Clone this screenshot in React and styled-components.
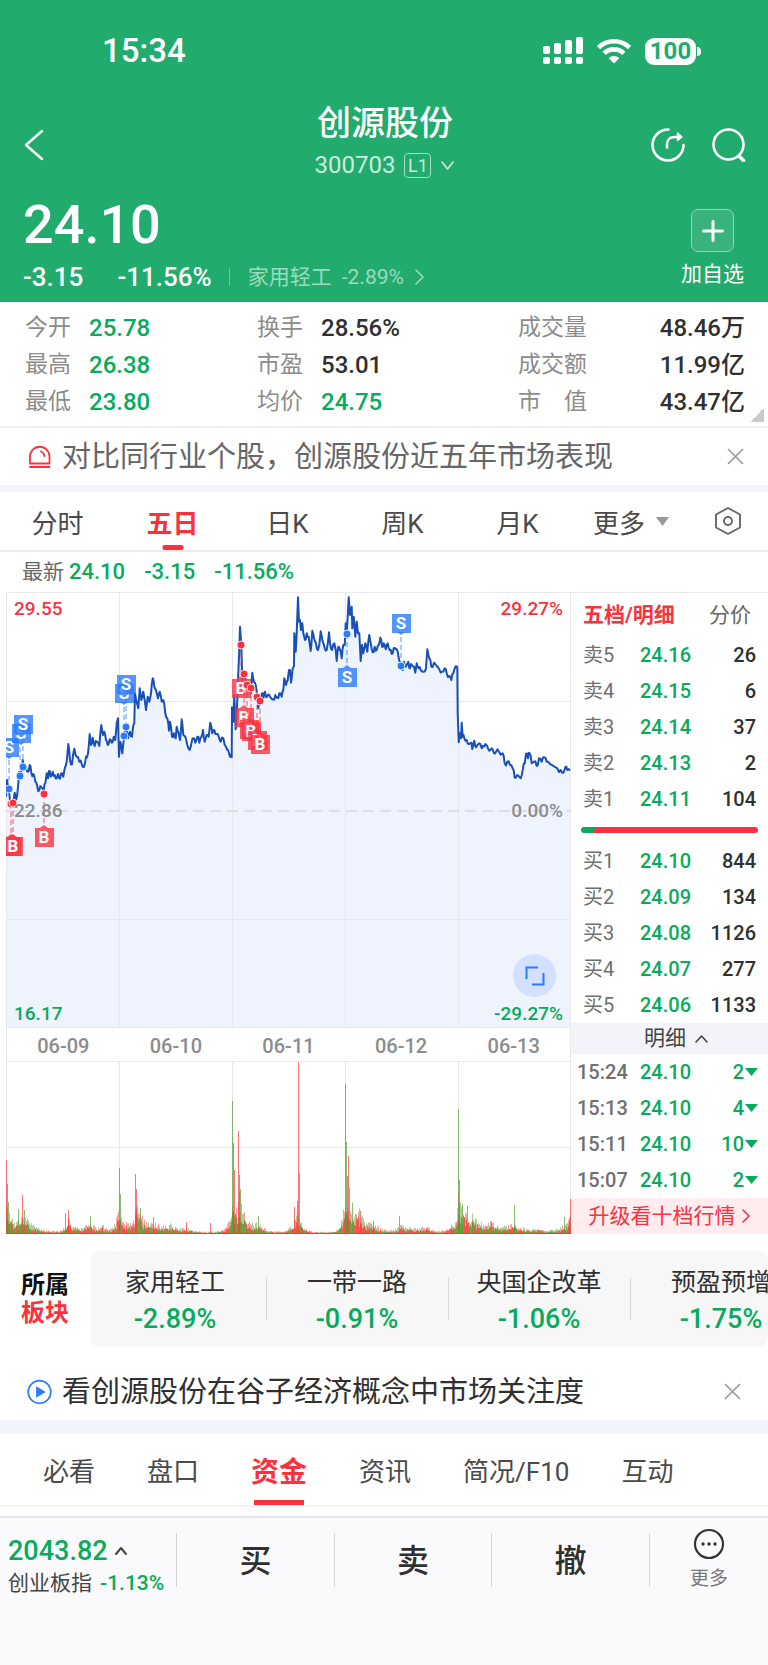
import React from "react";
import styled, { createGlobalStyle, css } from "styled-components";

const color = {
  header: "#21ab6d",
  green: "#07ab5b",
  red: "#fa323e",
  blue: "#2b7bff",
  ink: "#303030",
  text: "#4a4a4a",
  muted: "#8c8c8c",
  band: "#f2f4f9",
  rule: "#e8e8e8",
};

const GlobalStyle = createGlobalStyle`
  *, *::before, *::after { box-sizing: border-box; }
  body {
    margin: 0;
    background: #fff;
    color: ${color.ink};
    font-family: Roboto, "Noto Sans CJK SC", sans-serif;
  }
  button {
    margin: 0;
    padding: 0;
    border: 0;
    background: none;
    color: inherit;
    font: inherit;
    cursor: pointer;
  }
  a { color: inherit; text-decoration: none; }
  svg { display: block; flex: none; }
  h1, h2, p, dl, dd, dt, ul { margin: 0; padding: 0; list-style: none; }
`;

const Page = styled.div`
  display: flex;
  flex-direction: column;
  min-height: 100vh;
`;

/* ---------- header ---------- */

const Header = styled.header`
  background: ${color.header};
  color: #fff;
`;

const StatusBar = styled.div`
  display: flex;
  align-items: center;
  justify-content: space-between;
  height: 102px;
  padding: 0 67px 0 102px;
`;

const Clock = styled.time`
  font-size: 33px;
  font-weight: 500;
  line-height: 40px;
`;

const StatusIcons = styled.div`
  display: flex;
  align-items: center;
  gap: 14px;
`;

const Battery = styled.div`
  display: flex;
  align-items: center;
  gap: 1px;
`;

const BatteryBody = styled.span`
  width: 51px;
  height: 27px;
  border-radius: 9px;
  background: #fff;
  color: ${color.header};
  font-size: 24px;
  font-weight: 700;
  line-height: 27px;
  text-align: center;
`;

const BatteryTip = styled.span`
  width: 4px;
  height: 9px;
  border-radius: 0 4px 4px 0;
  background: #fff;
`;

const NavBar = styled.nav`
  display: grid;
  grid-template-columns: 1fr auto 1fr;
  align-items: center;
  height: 85px;
  padding: 0 22px 0 24px;
`;

const TitleBlock = styled.div`
  display: flex;
  flex-direction: column;
  align-items: center;
`;

const StockName = styled.h1`
  font-size: 34px;
  font-weight: 500;
  line-height: 42px;
`;

const CodeButton = styled.button`
  display: flex;
  align-items: center;
  gap: 9px;
  color: #cdebdc;
  font-size: 24px;
  line-height: 43px;
`;

const LevelBadge = styled.span`
  width: 27px;
  height: 25px;
  border: 1px solid #a9dcc5;
  border-radius: 4px;
  font-size: 18px;
  line-height: 23px;
  text-align: center;
`;

const NavActions = styled.div`
  display: flex;
  justify-content: flex-end;
  gap: 27px;
`;

const Quote = styled.section`
  display: flex;
  justify-content: space-between;
  height: 115px;
  padding: 4px 24px 0 23px;
`;

const Price = styled.p`
  padding-top: 2px;
  font-size: 54px;
  font-weight: 500;
  line-height: 64px;
`;

const ChangeRow = styled.div`
  display: flex;
  align-items: center;
  margin-top: 4px;
  font-size: 26px;
  font-weight: 500;
  line-height: 32px;
`;

const ChangePercent = styled.span`
  margin-left: 34px;
`;

const IndustryLink = styled.a`
  display: flex;
  align-items: center;
  gap: 10px;
  margin-left: 17px;
  color: #9edabf;
  font-size: 21px;
  font-weight: 400;
  line-height: 24px;

  &::before {
    content: "";
    width: 1px;
    height: 18px;
    margin-right: 8px;
    background: #6cc69c;
  }
`;

const AddButton = styled.button`
  display: flex;
  flex-direction: column;
  align-items: center;
  padding-top: 18px;
  font-size: 21px;
  line-height: 24px;
`;

const AddBox = styled.span`
  display: grid;
  place-items: center;
  width: 43px;
  height: 43px;
  margin-bottom: 10px;
  border: 1px solid #90d5b6;
  border-radius: 7px;
  background: #37b37b;
`;

/* ---------- key figures ---------- */

const Figures = styled.dl`
  position: relative;
  display: grid;
  grid-template-columns: 232fr 261fr 227fr;
  padding: 7px 23px 6px 25px;
  border-bottom: 2px solid #f0f0f0;

  &::after {
    content: "";
    position: absolute;
    right: 4px;
    bottom: 4px;
    width: 14px;
    height: 14px;
    background: linear-gradient(135deg, transparent 50%, #cacaca 50%);
  }
`;

const Figure = styled.div`
  display: flex;
  align-items: center;
  justify-content: ${(p) => (p.$spread ? "space-between" : "flex-start")};
  gap: 18px;
  height: 37px;
  font-size: 23px;
  line-height: 37px;

  dt { color: ${color.muted}; white-space: pre; }
  dd {
    padding-top: 2px;
    color: ${(p) => (p.$down ? color.green : color.ink)};
    font-size: 24px;
    font-weight: 500;
  }
`;

/* ---------- notices ---------- */

const Notice = styled.div`
  display: flex;
  align-items: center;
  height: ${(p) => (p.$tall ? "73px" : "57px")};
  padding: ${(p) => (p.$tall ? "16px 27px 0 27px" : "0 24px 0 27px")};
`;

const NoticeLink = styled.a`
  display: flex;
  flex: 1;
  align-items: center;
  gap: 10px;
  color: ${(p) => (p.$strong ? color.ink : "#666")};
  font-size: 29px;
  line-height: 40px;
  white-space: nowrap;
`;

const Band = styled.div`
  height: ${(p) => (p.$thick ? "14px" : "7px")};
  background: ${color.band};
`;

/* ---------- tabs ---------- */

const PeriodTabs = styled.div`
  display: grid;
  grid-template-columns: repeat(5, 115fr) 112fr 81fr;
  height: 60px;
  border-bottom: 2px solid #ebebeb;
`;

const activeMark = css`
  &::after {
    content: "";
    position: absolute;
    bottom: 0;
    left: 50%;
    width: ${(p) => (p.$wide ? "50px" : "21px")};
    height: 5px;
    border-radius: ${(p) => (p.$wide ? "0" : "2px")};
    background: ${color.red};
    transform: translateX(-50%);
  }
`;

const Tab = styled.button`
  position: relative;
  display: flex;
  align-items: center;
  justify-content: center;
  gap: 11px;
  color: ${(p) => (p.$active ? color.red : color.text)};
  font-size: ${(p) => (p.$active && p.$wide ? "28px" : "26px")};
  font-weight: ${(p) => (p.$active ? 700 : 400)};
  white-space: nowrap;
  ${(p) => p.$active && activeMark}
`;

const InfoTabs = styled.div`
  display: flex;
  gap: 52px;
  height: 73px;
  margin-bottom: 9px;
  padding: 0 43px;
  border-bottom: 2px solid #f2f2f2;
`;

/* ---------- chart area ---------- */

const Latest = styled.p`
  display: flex;
  align-items: center;
  gap: 19px;
  height: 40px;
  padding-left: 22px;
  color: ${color.green};
  font-size: 22px;
  font-weight: 500;
  line-height: 30px;
`;

const LatestLabel = styled.span`
  margin-right: -14px;
  color: #666;
  font-size: 21px;
  font-weight: 400;
`;

const Market = styled.section`
  display: grid;
  grid-template-columns: minmax(0, 1fr) 197px;
  padding-left: 6px;
`;

const Charts = styled.div`
  svg { width: 100%; height: auto; }
`;

const PricePane = styled.div`
  position: relative;
`;

const AxisLabel = styled.span`
  position: absolute;
  ${(p) => (p.$right ? "right: 8px;" : "left: 8px;")}
  ${(p) => p.$at === "top" && "top: 6px;"}
  ${(p) => p.$at === "middle" && "top: calc(50% - 10px);"}
  ${(p) => p.$at === "bottom" && "bottom: 3px;"}
  color: ${(p) => p.$tone};
  font-size: 19px;
  font-weight: 500;
  line-height: 22px;
`;

const ExpandButton = styled.button`
  position: absolute;
  right: 15px;
  bottom: 31px;
  display: grid;
  place-items: center;
  width: 43px;
  height: 43px;
  border-radius: 50%;
  background: #d3e0ff;

  svg { width: 20px; }
`;

const Dates = styled.div`
  display: grid;
  grid-template-columns: repeat(5, 1fr);
  height: 33px;
  border-left: 1px solid ${color.rule};
  border-right: 1px solid ${color.rule};
  color: ${color.muted};
  font-size: 20px;
  font-weight: 500;
  line-height: 36px;
  text-align: center;
`;

/* ---------- order book ---------- */

const Book = styled.aside`
  display: flex;
  flex-direction: column;
  border-top: 1px solid ${color.rule};
`;

const BookTabs = styled.div`
  display: flex;
  justify-content: space-between;
  height: 44px;
  padding: 0 17px 5px 12px;
`;

const BookTab = styled.button`
  color: ${(p) => (p.$active ? color.red : "#666")};
  font-size: 21px;
  font-weight: ${(p) => (p.$active ? 700 : 400)};
`;

const BookTable = styled.table`
  width: 100%;
  border-collapse: collapse;
  table-layout: fixed;
  font-size: 20px;
  font-weight: 500;
  line-height: 24px;

  tr { height: 36px; }
  th, td { padding: 0; }
  th {
    width: 69px;
    padding-left: ${(p) => (p.$trades ? "6px" : "12px")};
    color: #707070;
    font-weight: ${(p) => (p.$trades ? 500 : 400)};
    text-align: left;
  }
  td:nth-child(2) { color: ${color.green}; }
  td:last-child {
    padding-right: ${(p) => (p.$trades ? "10px" : "12px")};
    color: ${(p) => (p.$trades ? color.green : color.ink)};
    text-align: right;
  }
`;

const Volume = styled.span`
  display: flex;
  align-items: center;
  justify-content: flex-end;
  gap: 1px;
`;

const Ratio = styled.div`
  height: 6px;
  margin: 10px;
  border-radius: 3px;
  background: linear-gradient(120deg, ${color.green} 13px, ${color.red} 13px);
`;

const DetailToggle = styled.button`
  display: flex;
  align-items: center;
  justify-content: center;
  gap: 8px;
  height: 31px;
  padding-left: 14px;
  background: ${color.band};
  color: #444;
  font-size: 21px;
  line-height: 31px;
`;

const Upgrade = styled.a`
  display: flex;
  align-items: center;
  justify-content: center;
  gap: 5px;
  height: 36px;
  background: #feecee;
  color: ${color.red};
  font-size: 21px;
  line-height: 32px;
`;

/* ---------- sectors ---------- */

const Sectors = styled.section`
  display: flex;
  align-items: center;
  padding-top: 17px;
`;

const SectorHeading = styled.h2`
  flex: none;
  width: 90px;
  color: #111;
  font-size: 24px;
  font-weight: 700;
  line-height: 28px;
  text-align: center;

  em { display: block; color: ${color.red}; font-style: normal; }
`;

const SectorScroller = styled.div`
  flex: 1;
  min-width: 0;
  height: 96px;
  overflow: hidden;
  border-radius: 9px;
  background: #f7f7f7;
`;

const SectorList = styled.ul`
  display: flex;
  margin-left: -6px;
`;

const SectorItem = styled.li`
  position: relative;
  flex: 0 0 182px;
  padding: 14px 0;
  font-size: 25px;
  line-height: 36px;
  text-align: center;

  strong {
    display: block;
    color: ${color.green};
    font-size: 27px;
    font-weight: 500;
  }
  & + &::before {
    content: "";
    position: absolute;
    top: 26px;
    left: 0;
    width: 1px;
    height: 43px;
    background: #d8d8d8;
  }
`;

/* ---------- trade bar ---------- */

const TradeBar = styled.footer`
  display: grid;
  grid-template-columns: 176fr 158fr 157fr 158fr 119fr;
  align-items: start;
  flex: 1;
  min-height: 149px;
  padding-top: 15px;
  border-top: 2px solid #e4e5e9;
  background: #fafafc;
`;

const IndexButton = styled.button`
  display: flex;
  flex-direction: column;
  justify-content: center;
  height: 54px;
  padding-left: 8px;
  margin-top: 6px;
  text-align: left;
  white-space: nowrap;
`;

const IndexValue = styled.span`
  display: flex;
  align-items: center;
  gap: 6px;
  color: ${color.green};
  font-size: 27px;
  font-weight: 500;
  line-height: 34px;
`;

const IndexChange = styled.span`
  color: #444;
  font-size: 21px;
  line-height: 30px;

  b {
    margin-left: 8px;
    color: ${color.green};
    font-weight: 500;
  }
`;

const TradeButton = styled.button`
  height: 54px;
  border-left: 1px solid #d6d6d9;
  font-size: 32px;
  font-weight: 500;
  line-height: 56px;
`;

const MoreButton = styled(TradeButton)`
  display: flex;
  flex-direction: column;
  align-items: center;
  gap: 5px;
  color: #777;
  font-size: 19px;
  font-weight: 400;
  line-height: 28px;
  white-space: nowrap;

  svg { margin-top: -5px; }
`;

/* ---------- icons ---------- */

const Chevron = ({ dir, w, h, stroke = "currentColor", width = 2 }) => {
  const paths = {
    left: `M${w - 2} 2L2 ${h / 2}L${w - 2} ${h - 2}`,
    right: `M2 2L${w - 2} ${h / 2}L2 ${h - 2}`,
    up: `M2 ${h - 2}L${w / 2} 2L${w - 2} ${h - 2}`,
    down: `M2 2L${w / 2} ${h - 2}L${w - 2} 2`,
  };
  return (
    <svg width={w} height={h} fill="none" stroke={stroke} strokeWidth={width} strokeLinecap="round" strokeLinejoin="round" aria-hidden="true">
      <path d={paths[dir]} />
    </svg>
  );
};

const SignalIcon = () => (
  <svg width="40" height="28" fill="#fff" aria-hidden="true">
    {[0, 1, 2, 3].map((i) => (
      <g key={i}>
        <rect x={i * 11} y={9 - i * 3} width="7" height={8 + i * 3} rx="2" />
        <rect x={i * 11} y="20" width="7" height="7" rx="2" />
      </g>
    ))}
  </svg>
);

const WifiIcon = () => (
  <svg width="34" height="26" fill="none" stroke="#fff" strokeWidth="4.6" aria-hidden="true">
    <path d="M1.5 9.5C10 1.2 24 1.2 32.5 9.5" />
    <path d="M7.2 15.3C12.5 10 21.5 10 26.8 15.3" />
    <path d="M17 25.5L11.7 20.2C14.5 17.2 19.5 17.2 22.3 20.2Z" fill="#fff" stroke="none" />
  </svg>
);

const ShareIcon = () => (
  <svg width="34" height="34" fill="none" stroke="#fff" strokeWidth="2.6" strokeLinecap="round" strokeLinejoin="round" aria-hidden="true">
    <path d="M17.5 1.5A15.5 15.5 0 1 0 32.5 17" />
    <path d="M16 19.5V16.5C16 12 19 9 23.5 9H29" />
    <path d="M26.5 5L31 9L26.5 12.5Z" fill="#fff" strokeWidth="1.5" />
  </svg>
);

const SearchIcon = () => (
  <svg width="34" height="34" fill="none" stroke="#fff" strokeWidth="2.6" strokeLinecap="round" aria-hidden="true">
    <circle cx="16.5" cy="16.5" r="15" />
    <path d="M27 28L31.5 32.5" strokeWidth="3.6" />
  </svg>
);

const PlusIcon = () => (
  <svg width="22" height="22" stroke="#fff" strokeWidth="3" strokeLinecap="round" aria-hidden="true">
    <path d="M11 1.5V20.5M1.5 11H20.5" />
  </svg>
);

const AlarmIcon = () => (
  <svg width="25" height="24" fill="none" stroke={color.red} strokeWidth="1.8" strokeLinecap="round" aria-hidden="true">
    <path d="M3 18.5V11.5A9.7 9.7 0 0 1 22.5 11.5V18.5Z" strokeLinejoin="round" />
    <path d="M14 6.500Q17 7.500 17.500 11M3 22H22.500" />
  </svg>
);

const PlayIcon = () => (
  <svg width="25" height="26" fill="none" stroke={color.blue} strokeWidth="1.7" aria-hidden="true">
    <circle cx="12.5" cy="13" r="11.3" />
    <path d="M10 8.800L17 13L10 17.200Z" fill={color.blue} />
  </svg>
);

const CloseIcon = () => (
  <svg width="17" height="17" stroke="#999" strokeWidth="1.6" aria-hidden="true">
    <path d="M1 1L16 16M16 1L1 16" />
  </svg>
);

const SettingsIcon = () => (
  <svg width="28" height="30" fill="none" stroke="#666" strokeWidth="1.9" strokeLinejoin="round" aria-hidden="true">
    <path d="M14 2L26 8.500V21.500L14 28L2 21.500V8.500Z" />
    <circle cx="14" cy="15" r="4" />
  </svg>
);

const Triangle = ({ w, h, fill }) => (
  <svg width={w} height={h} fill={fill} aria-hidden="true">
    <path d={`M0 0H${w}L${w / 2} ${h}Z`} />
  </svg>
);

const MoreIcon = () => (
  <svg width="32" height="32" fill="none" stroke="#333" strokeWidth="2.2" aria-hidden="true">
    <circle cx="16" cy="16" r="14" />
    <g fill="#333" stroke="none">
      <circle cx="10" cy="16" r="1.7" />
      <circle cx="16" cy="16" r="1.7" />
      <circle cx="22" cy="16" r="1.7" />
    </g>
  </svg>
);

const ExpandIcon = () => (
  <svg viewBox="0 0 20 20" fill="none" stroke={color.blue} strokeWidth="2" aria-hidden="true">
    <path d="M1.5 13V1.5H13M18.5 7V18.5H7" />
  </svg>
);

/* ---------- chart data ---------- */

const parse = (text) => text.split(" ").map((s) => s.split(",").map(Number));

// x,y samples in thirds of a chart unit
const priceSamples = [
  ...parse(
    "0,614 3,564 8,591 12,624 20,639 26,602 30,624 36,584 40,539 44,551 50,504 54,529 60,524 66,539 71,519 76,542 82,546 88,569 94,584 100,594 106,586 113,596 118,574 122,544 126,559 129,537 134,554 140,539 146,549 152,559 156,546 162,560 168,544 172,554 176,529 182,509 187,456 192,504 198,517 205,470 212,494 220,509 228,519 234,524 240,494 246,484 251,426 255,459 260,437 266,462 273,449 280,462 286,399 291,429 295,419 300,444 305,459 311,442 317,452 323,434 328,444 332,394 336,379 339,494 343,449 349,484 354,434 360,404 366,439 372,419 378,434 382,399 385,394 387,304 393,334 397,349 401,289 406,324 412,299 416,324 420,354 425,314 430,329 435,304 440,259 445,284 450,294 456,319 461,299 467,329 472,324 478,364 484,379 489,416 492,389 498,434 504,424 509,439 512,404 518,424 522,444 527,382 532,429 538,434 544,459 551,474 557,449 562,439 568,452 574,434 580,452 586,434 591,414 596,449 602,429 608,434 613,392 619,424 625,414 632,426 638,434 644,449 652,439 660,464 666,474 672,494 677,496"
  ),
  ...parse(
    "678,346 682,389 685,309 689,412 693,344 697,244 702,104 706,159 709,264 713,246 717,259 724,279 730,289 735,304 739,242 744,269 749,279 753,304 757,349 762,328 768,304 772,319 777,299 783,314 790,309 796,319 802,322 808,309 814,316 820,304 827,314 832,294 835,259 840,279 845,264 849,234 852,234 855,272 860,229 864,223 865,124 869,179 872,124 876,16 879,89 882,84 885,114 889,94 892,124 897,144 902,124 908,134 914,177 919,116 924,139 930,154 936,174 940,159 944,118 950,149 956,169 962,174 969,121 972,152 978,174 985,154 989,174 992,207 997,164 1002,174 1007,199 1012,159"
  ),
  ...parse(
    "1016,159 1019,94 1022,124 1028,16 1032,69 1037,44 1039,109 1043,74 1048,134 1052,89 1056,124 1060,124 1064,207 1068,159 1072,184 1078,154 1084,179 1090,129 1095,159 1100,181 1106,164 1112,174 1118,159 1123,137 1128,164 1133,154 1139,172 1145,154 1151,174 1157,186 1163,169 1170,172 1175,179 1180,206 1185,222 1190,234 1194,209 1200,224 1207,209 1212,229 1218,219 1224,224 1228,242 1232,214 1238,229 1244,234 1252,239 1260,229 1264,172 1270,199 1276,224 1284,212 1292,222 1300,232 1308,239 1316,229 1322,244 1330,252 1336,264 1342,244 1346,229 1354,226"
  ),
  ...parse(
    "1355,364 1358,451 1362,424 1365,439 1367,392 1370,434 1375,439 1382,444 1388,456 1394,452 1399,471 1405,446 1410,466 1419,454 1427,469 1434,464 1443,461 1450,476 1457,469 1464,484 1470,479 1479,479 1490,484 1496,514 1504,509 1512,519 1520,529 1526,557 1534,549 1544,559 1550,534 1556,514 1560,486 1566,499 1571,484 1577,514 1584,509 1592,522 1599,499 1607,509 1615,496 1622,509 1632,516 1642,522 1654,529 1664,534 1672,542 1678,526 1684,534 1692,536"
  ),
];

const random = (seed) => () => {
  seed = (seed * 1103515245 + 12345) % 2147483648;
  return seed / 2147483648;
};

const buildPriceLine = () => {
  const rnd = random(7);
  const out = [];
  priceSamples.forEach(([x, y], i) => {
    out.push([x / 3, y / 3]);
    const next = priceSamples[i + 1];
    if (next && next[0] - x > 4) {
      out.push([(x + next[0]) / 6, (y + next[1]) / 6 + (rnd() - 0.5) * 6]);
    }
  });
  return out.map(([x, y]) => `${x.toFixed(1)},${y.toFixed(1)}`).join(" ");
};
const priceLine = buildPriceLine();

// x, peak height, spread to the left, spread to the right
const volumeHumps = [
  [0, 30, 1, 7], [17, 20, 4, 9], [62, 13, 4, 7], [83, 12, 4, 5], [96, 7, 4, 4], [112, 24, 3, 8],
  [130, 26, 3, 9], [147, 8, 3, 7], [163, 7, 6, 7], [182, 5, 8, 5], [226, 36, 4, 7], [233, 25, 2, 8],
  [252, 9, 3, 4], [291, 20, 5, 5], [339, 38, 3, 8], [352, 16, 5, 8], [366, 6, 5, 9], [394, 9, 3, 9],
  [420, 6, 12, 5], [444, 6, 5, 6], [452, 38, 2, 9], [466, 10, 6, 12], [485, 8, 4, 5], [508, 9, 12, 9],
  [532, 4, 6, 6], [564, 18, 7, 1],
];
// x, height, 0 = rise and 1 = fall
const volumeSpikes = [
  [0, 74, 0], [1, 50, 0], [2, 32, 1], [12, 25, 1], [16, 39, 0], [18, 24, 1], [59, 21, 0], [62, 24, 0], [84, 18, 1],
  [113, 66, 0], [114, 40, 1], [129, 60, 0], [130, 45, 0], [134, 26, 1], [147, 17, 1], [180, 12, 0], [204, 11, 0],
  [226, 133, 1], [227, 91, 0], [228, 64, 0], [232, 103, 0], [233, 59, 0], [234, 45, 1], [252, 18, 1],
  [288, 27, 0], [291, 33, 0], [292, 172, 0], [293, 61, 1], [339, 150, 0], [340, 92, 1], [341, 58, 0], [342, 78, 0],
  [343, 46, 1], [346, 31, 1], [354, 23, 0], [367, 13, 0], [393, 18, 1], [452, 125, 1], [453, 54, 0],
  [456, 30, 1], [461, 28, 1], [466, 13, 1], [485, 13, 1], [508, 29, 1], [558, 17, 1], [563, 16, 0], [564, 35, 0],
];

const buildVolume = () => {
  const rnd = random(42);
  const bars = [];
  for (let x = 0; x < 565; x += 1) {
    let envelope = 2;
    volumeHumps.forEach(([cx, h, l, r]) => {
      const d = x - cx;
      envelope += h * Math.exp(-Math.abs(d) / (d < 0 ? l : r));
    });
    bars.push([x, envelope * (0.5 + rnd() * 0.6), rnd() > 0.5 ? 1 : 0, 0.5]);
    bars.push([x, envelope * (0.3 + rnd() * 0.4), rnd() > 0.5 ? 1 : 0, 0.8]);
  }
  return bars;
};
const volumeBars = buildVolume();
const barColor = ["#fb3b3b", "#55a032"];

// side, dot x/y, flag centre x/y
const trades = [
  ["S", 3, 197, 3, 155], ["S", 14, 184, 15, 141], ["S", 17, 175, 17, 132],
  ["S", 118, 144, 118, 101], ["S", 120, 135, 120, 92],
  ["B", 5, 212, 5, 254], ["B", 7, 211, 7, 254], ["B", 38, 202, 38, 245],
  ["B", 235, 53, 235, 96], ["B", 238, 82, 238, 125], ["B", 241, 93, 243, 137], ["B", 245, 96, 245, 139],
  ["B", 251, 105, 251, 148], ["B", 254, 109, 254, 152],
  ["S", 341, 42, 341, 85], ["S", 395, 74, 395, 31],
];

const TradeMark = ({ side, dotX, dotY, x, y }) => {
  const fill = side === "B" ? color.red : color.blue;
  const below = y > dotY;
  const edge = below ? y - 9 : y + 9;
  const tip = below ? edge - 3 : edge + 3;
  return (
    <g>
      <path d={`M${dotX} ${dotY}V${tip}`} stroke={fill} strokeDasharray="5 3" opacity="0.8" />
      <g fill={fill} fillOpacity="0.8">
        <rect x={x - 9} y={y - 9} width="19" height="19" />
        <path d={`M${x - 4} ${edge}L${x} ${tip}L${x + 4} ${edge}Z`} />
      </g>
      <text x={x} y={y + 6} fill="#fff" fontSize="17" fontWeight="700" textAnchor="middle">{side}</text>
      <circle cx={dotX} cy={dotY} r="4" fill={fill} stroke="#fff" strokeWidth="0.8" />
    </g>
  );
};

const dayLines = [0.5, 113.5, 226.5, 339.5, 452.5, 564.5];

const PriceChart = () => (
  <svg viewBox="0 0 565 436" role="img" aria-label="五日走势">
    <polygon points={`0,436 ${priceLine} 565,436`} fill="#eef3fe" />
    <g stroke={color.rule} strokeWidth="1">
      {dayLines.map((x) => <path key={x} d={`M${x} 0V436`} />)}
      {[0.5, 109.5, 327.5, 435.5].map((y) => <path key={y} d={`M0 ${y}H565`} />)}
    </g>
    <path d="M0 219H565" stroke="#cfdbe6" strokeWidth="1.5" strokeDasharray="11 6" />
    <polyline points={priceLine} fill="none" stroke="#1850b8" strokeWidth="2" strokeLinejoin="round" />
    {trades.map(([side, dotX, dotY, x, y], i) => (
      <TradeMark key={i} side={side} dotX={dotX} dotY={dotY} x={x} y={y} />
    ))}
  </svg>
);

const VolumeChart = () => (
  <svg viewBox="0 0 565 173" role="img" aria-label="成交量">
    <g stroke={color.rule} strokeWidth="1">
      {dayLines.map((x) => <path key={x} d={`M${x} 0V173`} />)}
      {[0.5, 86.5].map((y) => <path key={y} d={`M0 ${y}H565`} />)}
    </g>
    {volumeBars.map(([x, h, c, o], i) => (
      <rect key={i} x={x} y={173 - h} width="1" height={h} fill={barColor[c]} opacity={o} />
    ))}
    {volumeSpikes.map(([x, h, c]) => (
      <rect key={x} x={x} y={173 - h} width="1" height={h} fill={barColor[c]} opacity="0.7" />
    ))}
    <path d="M0 172.5H565" stroke="#a0603a" />
  </svg>
);

/* ---------- content ---------- */

const figures = [
  ["今开", "25.78", true], ["换手", "28.56%"], ["成交量", "48.46万"],
  ["最高", "26.38", true], ["市盈", "53.01"], ["成交额", "11.99亿"],
  ["最低", "23.80", true], ["均价", "24.75", true], ["市　值", "43.47亿"],
];
const asks = [["卖5", "24.16", 26], ["卖4", "24.15", 6], ["卖3", "24.14", 37], ["卖2", "24.13", 2], ["卖1", "24.11", 104]];
const bids = [["买1", "24.10", 844], ["买2", "24.09", 134], ["买3", "24.08", 1126], ["买4", "24.07", 277], ["买5", "24.06", 1133]];
const ticks = [["15:24", "24.10", 2], ["15:13", "24.10", 4], ["15:11", "24.10", 10], ["15:07", "24.10", 2]];
const sectors = [["家用轻工", "-2.89%"], ["一带一路", "-0.91%"], ["央国企改革", "-1.06%"], ["预盈预增", "-1.75%"]];

const BookRows = ({ rows, trades: isTrades, label }) => (
  <BookTable $trades={isTrades} aria-label={label}>
    <tbody>
      {rows.map(([name, price, volume]) => (
        <tr key={name}>
          <th scope="row">{name}</th>
          <td>{price}</td>
          <td>
            {isTrades ? <Volume>{volume}<Triangle w={13} h={8} fill={color.green} /></Volume> : volume}
          </td>
        </tr>
      ))}
    </tbody>
  </BookTable>
);

export default function App() {
  return (
    <Page>
      <GlobalStyle />
      <Header>
        <StatusBar>
          <Clock>15:34</Clock>
          <StatusIcons>
            <SignalIcon />
            <WifiIcon />
            <Battery><BatteryBody>100</BatteryBody><BatteryTip /></Battery>
          </StatusIcons>
        </StatusBar>
        <NavBar>
          <button type="button" aria-label="返回"><Chevron dir="left" w={20} h={32} stroke="#fff" width={2.4} /></button>
          <TitleBlock>
            <StockName>创源股份</StockName>
            <CodeButton type="button">300703<LevelBadge>L1</LevelBadge><Chevron dir="down" w={15} h={11} width={1.6} /></CodeButton>
          </TitleBlock>
          <NavActions>
            <button type="button" aria-label="分享"><ShareIcon /></button>
            <button type="button" aria-label="搜索"><SearchIcon /></button>
          </NavActions>
        </NavBar>
        <Quote>
          <div>
            <Price>24.10</Price>
            <ChangeRow>
              <span>-3.15</span>
              <ChangePercent>-11.56%</ChangePercent>
              <IndustryLink href="#industry">
                家用轻工<span>-2.89%</span><Chevron dir="right" w={11} h={18} width={1.6} />
              </IndustryLink>
            </ChangeRow>
          </div>
          <AddButton type="button"><AddBox><PlusIcon /></AddBox>加自选</AddButton>
        </Quote>
      </Header>

      <Figures>
        {figures.map(([name, value, down], i) => (
          <Figure key={name} $down={down} $spread={i % 3 === 2}>
            <dt>{name}</dt><dd>{value}</dd>
          </Figure>
        ))}
      </Figures>

      <Notice>
        <NoticeLink href="#compare"><AlarmIcon />对比同行业个股，创源股份近五年市场表现</NoticeLink>
        <button type="button" aria-label="关闭"><CloseIcon /></button>
      </Notice>
      <Band />

      <PeriodTabs>
        {["分时", "五日", "日K", "周K", "月K"].map((name) => (
          <Tab key={name} type="button" $active={name === "五日"}>{name}</Tab>
        ))}
        <Tab type="button">更多<Triangle w={13} h={9} fill="#999" /></Tab>
        <Tab type="button" aria-label="设置"><SettingsIcon /></Tab>
      </PeriodTabs>

      <Latest>
        <LatestLabel>最新</LatestLabel>
        <span>24.10</span><span>-3.15</span><span>-11.56%</span>
      </Latest>

      <Market>
        <Charts>
          <PricePane>
            <PriceChart />
            <AxisLabel $at="top" $tone={color.red}>29.55</AxisLabel>
            <AxisLabel $at="top" $right $tone={color.red}>29.27%</AxisLabel>
            <AxisLabel $at="middle" $tone={color.muted}>22.86</AxisLabel>
            <AxisLabel $at="middle" $right $tone={color.muted}>0.00%</AxisLabel>
            <AxisLabel $at="bottom" $tone={color.green}>16.17</AxisLabel>
            <AxisLabel $at="bottom" $right $tone={color.green}>-29.27%</AxisLabel>
            <ExpandButton type="button" aria-label="全屏"><ExpandIcon /></ExpandButton>
          </PricePane>
          <Dates>
            {["06-09", "06-10", "06-11", "06-12", "06-13"].map((d) => <span key={d}>{d}</span>)}
          </Dates>
          <VolumeChart />
        </Charts>
        <Book>
          <BookTabs>
            <BookTab type="button" $active>五档/明细</BookTab>
            <BookTab type="button">分价</BookTab>
          </BookTabs>
          <BookRows rows={asks} label="卖盘" />
          <Ratio />
          <BookRows rows={bids} label="买盘" />
          <DetailToggle type="button">明细<Chevron dir="up" w={15} h={10} width={1.6} /></DetailToggle>
          <BookRows rows={ticks} trades label="成交明细" />
          <Upgrade href="#level2">升级看十档行情<Chevron dir="right" w={10} h={16} width={1.6} /></Upgrade>
        </Book>
      </Market>

      <Sectors>
        <SectorHeading>所属<em>板块</em></SectorHeading>
        <SectorScroller>
          <SectorList>
            {sectors.map(([name, change]) => (
              <SectorItem key={name}>{name}<strong>{change}</strong></SectorItem>
            ))}
          </SectorList>
        </SectorScroller>
      </Sectors>

      <Notice $tall>
        <NoticeLink href="#concept" $strong><PlayIcon />看创源股份在谷子经济概念中市场关注度</NoticeLink>
        <button type="button" aria-label="关闭"><CloseIcon /></button>
      </Notice>
      <Band $thick />

      <InfoTabs>
        {["必看", "盘口", "资金", "资讯", "简况/F10", "互动"].map((name) => (
          <Tab key={name} type="button" $wide $active={name === "资金"}>{name}</Tab>
        ))}
      </InfoTabs>

      <TradeBar>
        <IndexButton type="button">
          <IndexValue>2043.82<Chevron dir="up" w={14} h={10} stroke="#444" /></IndexValue>
          <IndexChange>创业板指<b>-1.13%</b></IndexChange>
        </IndexButton>
        <TradeButton type="button">买</TradeButton>
        <TradeButton type="button">卖</TradeButton>
        <TradeButton type="button">撤</TradeButton>
        <MoreButton type="button"><MoreIcon />更多</MoreButton>
      </TradeBar>
    </Page>
  );
}
